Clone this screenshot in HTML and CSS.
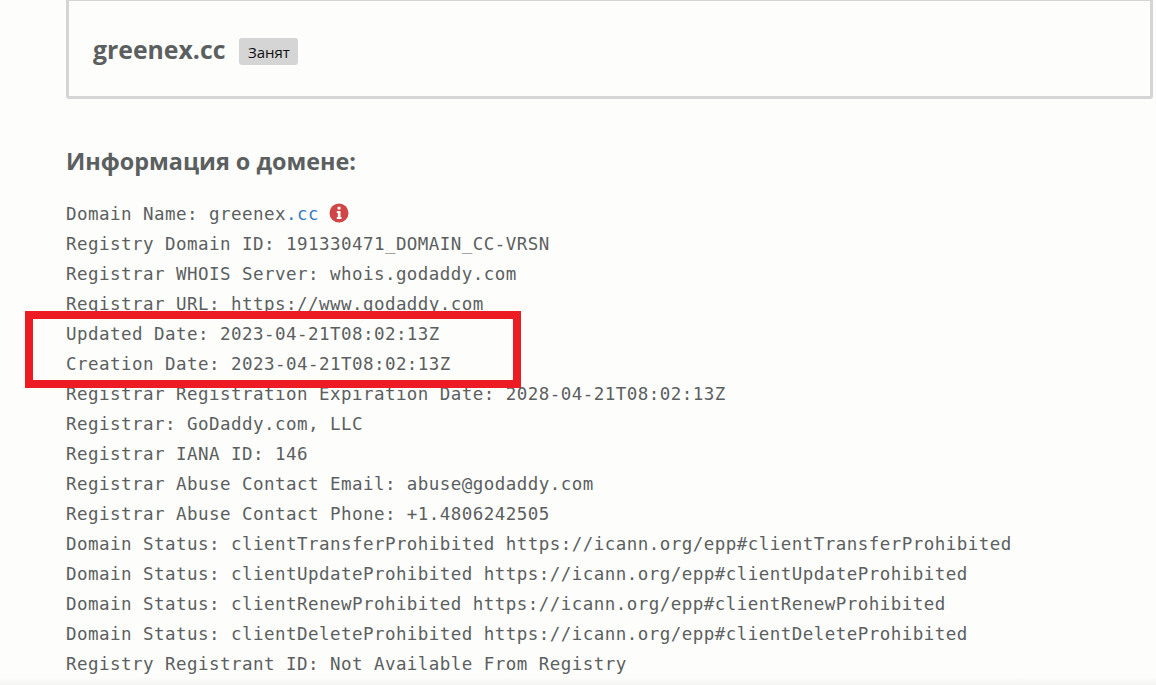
FILE: index.html
```html
<!DOCTYPE html>
<html lang="ru">
<head>
<meta charset="utf-8">
<title>greenex.cc</title>
<link rel="stylesheet" href="styles.css">
</head>
<body>
<main class="page">
  <section class="card">
    <h1 class="domain">greenex.cc</h1>
    <span class="badge">Занят</span>
  </section>
  <h2 class="heading">Информация о домене:</h2>
  <div class="whois">
    <div class="line">Domain Name: greenex<a class="tld" href="#">.cc</a> <svg class="info" viewBox="0 0 20 20" aria-hidden="true"><circle cx="10" cy="10" r="9.5" fill="#d04545"/><path fill="#fdfdfb" d="M8.6 3.8h2.9v2.6H8.6zM7.8 8h3.7v6h1v1.9H7.8V14h1v-4.1h-1z"/></svg></div>
    <div class="line">Registry Domain ID: 191330471_DOMAIN_CC-VRSN</div>
    <div class="line">Registrar WHOIS Server: whois.godaddy.com</div>
    <div class="line">Registrar URL: https://www.godaddy.com</div>
    <div class="line">Updated Date: 2023-04-21T08:02:13Z</div>
    <div class="line">Creation Date: 2023-04-21T08:02:13Z</div>
    <div class="line">Registrar Registration Expiration Date: 2028-04-21T08:02:13Z</div>
    <div class="line">Registrar: GoDaddy.com, LLC</div>
    <div class="line">Registrar IANA ID: 146</div>
    <div class="line">Registrar Abuse Contact Email: abuse@godaddy.com</div>
    <div class="line">Registrar Abuse Contact Phone: +1.4806242505</div>
    <div class="line">Domain Status: clientTransferProhibited https://icann.org/epp#clientTransferProhibited</div>
    <div class="line">Domain Status: clientUpdateProhibited https://icann.org/epp#clientUpdateProhibited</div>
    <div class="line">Domain Status: clientRenewProhibited https://icann.org/epp#clientRenewProhibited</div>
    <div class="line">Domain Status: clientDeleteProhibited https://icann.org/epp#clientDeleteProhibited</div>
    <div class="line">Registry Registrant ID: Not Available From Registry</div>
  </div>
</main>
<div class="highlight"></div>
<div class="fade"></div>
</body>
</html>
```
FILE: styles.css
```css
html, body {
  margin: 0;
  height: 685px;
  overflow: hidden;
  background: #fdfdfb;
}
.page {
  padding: 0 3px 0 66px;
  font-family: "Open Sans", sans-serif;
  color: #5b5f5f;
}
.card {
  display: flex;
  align-items: center;
  gap: 14px;
  height: 95px;
  margin-top: -2px;
  padding: 0 24px;
  border: 3px solid #d5d5d5;
  border-radius: 3px;
  box-sizing: content-box;
}
.domain {
  margin: 0;
  font-size: 24.8px;
  font-weight: 700;
  line-height: 32px;
}
.badge {
  display: flex;
  align-items: center;
  justify-content: center;
  width: 59px;
  height: 27px;
  margin-top: 6px;
  font-size: 15px;
  color: #111;
  background: #d5d5d5;
  border-radius: 3px;
}
.heading {
  margin: 47px 0 0;
  font-size: 23.4px;
  font-weight: 700;
  line-height: 30px;
}
.whois {
  margin-top: 23px;
  font-family: "DejaVu Sans Mono", monospace;
  font-size: 17.5px;
  letter-spacing: 0.46px;
  line-height: 30px;
}
.line {
  white-space: pre;
  height: 30px;
}
.tld {
  color: #3a7bbf;
  text-decoration: none;
}
.info {
  width: 20px;
  height: 20px;
  vertical-align: -3px;
  margin-left: -1px;
}
.highlight {
  position: absolute;
  left: 25px;
  top: 311px;
  width: 480px;
  height: 61px;
  border: 8px solid #ed1c24;
}
.fade {
  position: absolute;
  left: 0;
  right: 0;
  top: 677px;
  height: 8px;
  background: linear-gradient(to bottom, rgba(0, 0, 0, 0), rgba(0, 0, 0, 0.04));
}
```
